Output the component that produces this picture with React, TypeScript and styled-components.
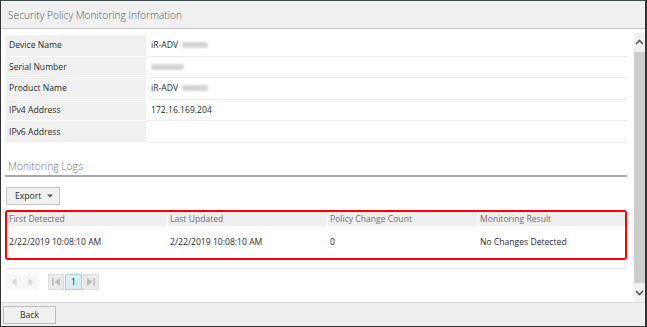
import React from 'react';
import styled, { createGlobalStyle } from 'styled-components';

const GlobalStyle = createGlobalStyle`
  html, body {
    margin: 0;
    padding: 0;
    background: #ffffff;
  }
  body {
    font-family: "Open Sans", "Noto Sans", sans-serif;
    color: #333333;
  }
  * {
    box-sizing: border-box;
  }
`;

const info = [
  { label: 'Device Name', value: 'iR-ADV', blur: true },
  { label: 'Serial Number', value: '', blur: true },
  { label: 'Product Name', value: 'iR-ADV', blur: true },
  { label: 'IPv4 Address', value: '172.16.169.204', blur: false },
  { label: 'IPv6 Address', value: '', blur: false },
];

const columns = ['First Detected', 'Last Updated', 'Policy Change Count', 'Monitoring Result'];
const logs = [['2/22/2019 10:08:10 AM', '2/22/2019 10:08:10 AM', '0', 'No Changes Detected']];

const Arrow = ({ dir, bar }: { dir: 'left' | 'right'; bar?: boolean }) => (
  <svg width="10" height="10" viewBox="0 0 10 10">
    {dir === 'left' ? (
      <>
        {bar && <rect x="1" y="1" width="1.6" height="8" fill="currentColor" />}
        <polygon points={bar ? '9,1 9,9 3.5,5' : '7.5,1 7.5,9 2.5,5'} fill="currentColor" />
      </>
    ) : (
      <>
        {bar && <rect x="7.4" y="1" width="1.6" height="8" fill="currentColor" />}
        <polygon points={bar ? '1,1 1,9 6.5,5' : '2.5,1 2.5,9 7.5,5'} fill="currentColor" />
      </>
    )}
  </svg>
);

const Chevron = ({ up }: { up?: boolean }) => (
  <svg width="9" height="6" viewBox="0 0 9 6">
    <polyline
      points={up ? '1,5 4.5,1.5 8,5' : '1,1 4.5,4.5 8,1'}
      fill="none"
      stroke="#555"
      strokeWidth="1.6"
    />
  </svg>
);

const Caret = () => (
  <svg width="6" height="4" viewBox="0 0 6 4">
    <polygon points="0,0.5 6,0.5 3,3.5" fill="#555" />
  </svg>
);

export default function App() {
  return (
    <>
      <GlobalStyle />
      <Frame>
        <Header>Security Policy Monitoring Information</Header>
        <Body>
          <Content>
            <InfoTable>
              {info.map((row) => (
                <InfoRow key={row.label}>
                  <InfoLabel>{row.label}</InfoLabel>
                  <InfoValue>
                    {row.value && <span>{row.value}</span>}
                    {row.blur && <Blur wide={!row.value} />}
                  </InfoValue>
                </InfoRow>
              ))}
            </InfoTable>

            <SectionTitle>Monitoring Logs</SectionTitle>

            <Toolbar>
              <Button>
                Export <Caret />
              </Button>
            </Toolbar>

            <Grid>
              <GridHead>
                {columns.map((c) => (
                  <HeadCell key={c}>{c}</HeadCell>
                ))}
              </GridHead>
              {logs.map((r, i) => (
                <GridRow key={i}>
                  {r.map((v, j) => (
                    <Cell key={j}>{v}</Cell>
                  ))}
                </GridRow>
              ))}
            </Grid>

            <Pager>
              <PageGroup>
                <NavButton>
                  <Arrow dir="left" />
                </NavButton>
                <NavButton>
                  <Arrow dir="right" />
                </NavButton>
              </PageGroup>
              <PageGroup>
                <EdgeButton>
                  <Arrow dir="left" bar />
                </EdgeButton>
                <PageNumber>1</PageNumber>
                <EdgeButton>
                  <Arrow dir="right" bar />
                </EdgeButton>
              </PageGroup>
            </Pager>
          </Content>

          <Scrollbar>
            <ScrollArrow>
              <Chevron up />
            </ScrollArrow>
            <Thumb />
            <ScrollArrow>
              <Chevron />
            </ScrollArrow>
          </Scrollbar>
        </Body>
        <Footer>
          <BackButton>Back</BackButton>
        </Footer>
      </Frame>
    </>
  );
}

const Frame = styled.div`
  width: 647px;
  height: 327px;
  display: flex;
  flex-direction: column;
  border-top: 1px solid #3a4a4a;
  border-left: 1px solid #333;
  border-right: 2px solid #333;
  border-bottom: 1px solid #333;
  background: #ffffff;
  overflow: hidden;
`;

const Header = styled.div`
  height: 28px;
  flex: none;
  background: #f0f0f0;
  border-bottom: 1px solid #c4c4c4;
  padding: 0 0 0 7px;
  display: flex;
  align-items: center;
  font-size: 10.2px;
  font-weight: 300;
  color: #555;
`;

const Body = styled.div`
  flex: 1;
  display: flex;
  min-height: 0;
`;

const Content = styled.div`
  flex: 1;
  padding: 6px 7px 0 4px;
  display: flex;
  flex-direction: column;
`;

const InfoTable = styled.div`
  display: flex;
  flex-direction: column;
`;

const InfoRow = styled.div`
  display: flex;
  height: 21.6px;
  font-size: 8.6px;
`;

const InfoLabel = styled.div`
  width: 141px;
  flex: none;
  background: #f0f0f0;
  border-bottom: 1px solid #ffffff;
  padding-left: 4px;
  display: flex;
  align-items: center;
  color: #2a2a2a;
`;

const InfoValue = styled.div`
  flex: 1;
  border-bottom: 1px solid #ececec;
  padding-left: 5px;
  display: flex;
  align-items: center;
  gap: 4px;
  color: #2a2a2a;
`;

const Blur = styled.span<{ wide?: boolean }>`
  display: inline-block;
  width: ${(p) => (p.wide ? '33px' : '26px')};
  height: 6px;
  border-radius: 2px;
  background: #d4d4d4;
  filter: blur(1px);
`;

const SectionTitle = styled.div`
  margin-top: 15px;
  padding: 0 0 1px 3px;
  line-height: 16px;
  border-bottom: 2px solid #a8a8a8;
  font-size: 10.3px;
  font-weight: 300;
  color: #707070;
`;

const Toolbar = styled.div`
  display: flex;
  padding: 10px 0 5px 1px;
`;

const Button = styled.div`
  height: 18px;
  width: 54px;
  display: flex;
  align-items: center;
  padding-left: 8px;
  gap: 6px;
  background: #f0f0f0;
  border: 1px solid #c6c6c6;
  font-size: 8.6px;
  color: #2a2a2a;
`;

const Grid = styled.div`
  border: 2px solid #ff0000;
  border-radius: 3px;
  display: flex;
  flex-direction: column;
`;

const GridHead = styled.div`
  display: grid;
  grid-template-columns: 161px 160px 150px 1fr;
  background: #efefef;
  height: 14px;
`;

const HeadCell = styled.div`
  font-size: 8.6px;
  color: #707070;
  padding-left: 2px;
  line-height: 14px;
  border-right: 1px solid #ffffff;
  &:last-child {
    border-right: none;
  }
`;

const GridRow = styled.div`
  display: grid;
  grid-template-columns: 161px 160px 150px 1fr;
  height: 32px;
  align-items: center;
`;

const Cell = styled.div`
  font-size: 8.6px;
  color: #2a2a2a;
  padding-left: 2px;
`;

const Pager = styled.div`
  margin-top: 8px;
  border-top: 1px solid #e8e8e8;
  padding: 5px 0 0 1px;
  display: flex;
  gap: 9px;
`;

const PageGroup = styled.div`
  display: flex;
  gap: 1px;
`;

const NavButton = styled.div`
  width: 16px;
  height: 16px;
  display: flex;
  align-items: center;
  justify-content: center;
  background: #f7f7f7;
  color: #d8d8d8;
`;

const EdgeButton = styled(NavButton)`
  background: #ebebeb;
  border: 1px solid #dddddd;
  color: #bcbcbc;
`;

const PageNumber = styled.div`
  width: 17px;
  height: 16px;
  display: flex;
  align-items: center;
  justify-content: center;
  background: #dceef5;
  border: 1px solid #a9d0df;
  font-size: 8.6px;
  color: #222;
`;

const Scrollbar = styled.div`
  width: 11px;
  flex: none;
  background: #f0f0f0;
  margin-top: 4px;
  display: flex;
  flex-direction: column;
  align-items: stretch;
`;

const ScrollArrow = styled.div`
  height: 18px;
  display: flex;
  align-items: center;
  justify-content: center;
`;

const Thumb = styled.div`
  flex: 1;
  background: #cdcdcd;
  margin: 1px 0;
`;

const Footer = styled.div`
  height: 24px;
  flex: none;
  background: #efefef;
  border-top: 1px solid #d8d8d8;
  padding: 3px 0 0 2px;
`;

const BackButton = styled.div`
  width: 53px;
  height: 18px;
  display: flex;
  align-items: center;
  justify-content: center;
  background: #f0f0f0;
  border: 1px solid #bcbcbc;
  font-size: 8.6px;
  color: #2a2a2a;
`;
